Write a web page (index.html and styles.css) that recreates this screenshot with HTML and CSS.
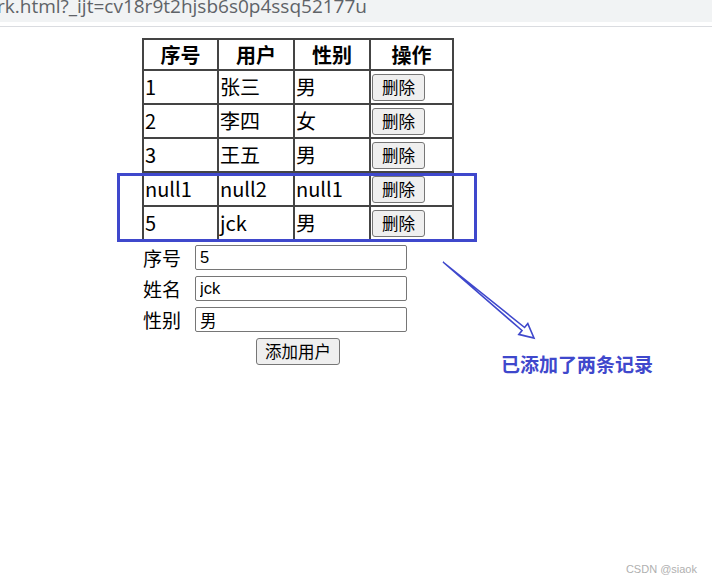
FILE: index.html
```html
<!DOCTYPE html>
<html lang="zh">
<head>
<meta charset="utf-8">
<title>用户管理</title>
<link rel="stylesheet" href="styles.css">
</head>
<body>
<div class="topbar">
  <div class="omnibox"><span class="url">rk.html?_ijt=cv18r9t2hjsb6s0p4ssq52177u</span></div>
</div>
<div class="page">
  <div class="content">
    <table class="users">
      <tr><th class="c1">序号</th><th class="c2">用户</th><th class="c3">性别</th><th class="c4">操作</th></tr>
      <tr><td>1</td><td>张三</td><td>男</td><td class="act"><button class="btn">删除</button></td></tr>
      <tr><td>2</td><td>李四</td><td>女</td><td class="act"><button class="btn">删除</button></td></tr>
      <tr><td>3</td><td>王五</td><td>男</td><td class="act"><button class="btn">删除</button></td></tr>
      <tr><td>null1</td><td>null2</td><td>null1</td><td class="act"><button class="btn">删除</button></td></tr>
      <tr><td>5</td><td>jck</td><td>男</td><td class="act"><button class="btn">删除</button></td></tr>
    </table>
    <form class="addform">
      <div class="row"><label>序号</label><input class="field" value="5"></div>
      <div class="row"><label>姓名</label><input class="field" value="jck"></div>
      <div class="row"><label>性别</label><input class="field" value="男"></div>
      <div class="submit"><button type="button" class="btn add">添加用户</button></div>
    </form>
  </div>
  <div class="highlight"></div>
  <svg class="arrow" width="712" height="585" viewBox="0 0 712 585">
    <polygon points="443,262 524.6,327.5 527.8,323.6 534,338 518.8,334.4 522,330.5" fill="#fff" stroke="#3f48cc" stroke-width="1.6" stroke-linejoin="miter"/>
  </svg>
  <div class="note">已添加了两条记录</div>
  <div class="watermark">CSDN @siaok</div>
</div>
</body>
</html>
```

FILE: styles.css
```css
html, body {
  margin: 0;
  padding: 0;
  background: #fff;
}
body {
  width: 712px;
  height: 585px;
  overflow: hidden;
  position: relative;
  font-family: "Noto Sans CJK SC", "Noto Sans", sans-serif;
}
.topbar {
  height: 26px;
  border-bottom: 1px solid #dadce0;
  background: #fff;
  overflow: hidden;
}
.omnibox {
  height: 22px;
  background: #f1f3f4;
  overflow: hidden;
}
.url {
  display: block;
  margin-left: -3px;
  margin-top: -7px;
  font-family: "Open Sans", "Noto Sans", sans-serif;
  font-size: 19px;
  line-height: 26px;
  color: #5f6368;
  white-space: nowrap;
}
.content {
  margin-left: 142px;
  padding-top: 11px;
  width: 312px;
}
.users {
  border: 1px solid #444;
  border-collapse: separate;
  border-spacing: 0;
  font-size: 20px;
  color: #000;
}
.users th, .users td {
  border: 1px solid #444;
  padding: 0 1px;
  text-align: left;
  white-space: nowrap;
}
.users th {
  height: 29px;
  line-height: 29px;
  text-align: center;
  font-weight: bold;
}
.users td {
  height: 32px;
  line-height: 32px;
}
.c1 { width: 71px; }
.c2 { width: 72px; }
.c3 { width: 72px; }
.c4 { width: 79px; }
.users td.act {
  line-height: 0;
  vertical-align: middle;
}
.btn {
  font-family: "Noto Sans CJK SC", sans-serif;
  font-size: 16.5px;
  height: 27px;
  line-height: 23px;
  padding: 0 9px;
  margin: 0;
  background: #efefef;
  border: 1px solid #767676;
  border-radius: 3px;
  color: #000;
}
.addform {
  margin: 4px 0 0;
}
.row {
  display: flex;
  align-items: center;
  height: 25px;
  margin-bottom: 6px;
}
.row label {
  width: 52px;
  font-size: 19px;
  line-height: 25px;
  padding-left: 1px;
  color: #000;
}
.field {
  box-sizing: border-box;
  width: 212px;
  height: 25px;
  margin: 0;
  padding: 0 4px;
  border: 1px solid #767676;
  border-radius: 2px;
  font-family: "Liberation Sans", "Noto Sans CJK SC", sans-serif;
  font-size: 16.5px;
  color: #000;
}
.submit {
  text-align: center;
}
.btn.add {
  padding: 0 8px;
}
.highlight {
  position: absolute;
  left: 117px;
  top: 173px;
  width: 354px;
  height: 63px;
  border: 3px solid #3f48cc;
}
.arrow {
  position: absolute;
  left: 0;
  top: 0;
}
.note {
  position: absolute;
  left: 501px;
  top: 350px;
  font-size: 19px;
  font-weight: bold;
  color: #3f48cc;
  line-height: 28px;
  white-space: nowrap;
}
.watermark {
  position: absolute;
  right: 15px;
  top: 563px;
  font-family: "Liberation Sans", sans-serif;
  font-size: 11px;
  color: #b0b0b0;
}
```
